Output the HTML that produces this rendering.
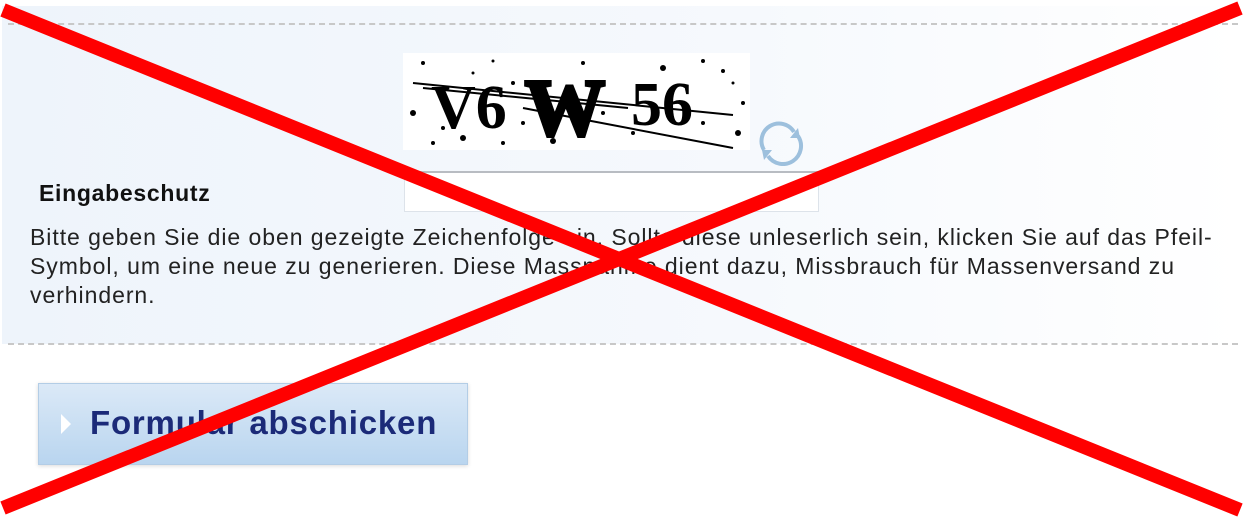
<!DOCTYPE html>
<html><head><meta charset="utf-8"><style>
body{margin:0;width:1244px;height:517px;background:#fff;position:relative;overflow:hidden;font-family:"Liberation Sans",Arial,sans-serif}
.panel{position:absolute;left:2px;top:6px;width:1240px;height:338px;background:linear-gradient(90deg,#eef4fb,#f6f9fd 60%,#fff)}
.dash{position:absolute;left:8px;width:1230px;border-top:2px dashed #c8c8c8}
.lbl{position:absolute;left:39px;top:180px;font-weight:bold;font-size:23px;letter-spacing:0.7px;color:#111}
.txt{position:absolute;left:30px;top:223px;white-space:nowrap;font-size:23px;letter-spacing:0.95px;line-height:29px;color:#222}
.cap{position:absolute;left:403px;top:53px;width:347px;height:97px;background:#fff}
.inp{position:absolute;left:404px;top:171px;width:413px;height:38px;background:#fff;border:1px solid #dde3ea;border-top:2px solid #b8bcc2}
.btn{position:absolute;left:38px;top:383px;width:428px;height:80px;background:linear-gradient(#dbe9f7,#b9d5ef);border:1px solid #b3cde6;box-shadow:0 1px 4px rgba(0,0,0,.15)}
.btn span{position:absolute;left:51px;top:20px;font-size:33px;letter-spacing:0.8px;font-weight:bold;color:#1b2a78}
.tri{position:absolute;left:22px;top:30px;width:0;height:0;border-left:10px solid #fff;border-top:10px solid transparent;border-bottom:10px solid transparent}
</style></head><body>
<div class="panel"></div>
<div class="dash" style="top:23px"></div>
<div class="dash" style="top:343px"></div>
<div class="cap"><svg width="347" height="97">
<g fill="#000">
<circle cx="20" cy="10" r="2"/><circle cx="90" cy="8" r="1.5"/><circle cx="260" cy="15" r="3"/><circle cx="300" cy="8" r="2"/><circle cx="320" cy="18" r="2"/><circle cx="10" cy="60" r="3"/><circle cx="40" cy="75" r="2"/><circle cx="60" cy="85" r="3"/><circle cx="120" cy="70" r="2"/><circle cx="150" cy="88" r="3"/><circle cx="230" cy="80" r="2"/><circle cx="300" cy="70" r="2"/><circle cx="335" cy="80" r="3"/><circle cx="340" cy="50" r="2"/><circle cx="180" cy="10" r="2"/><circle cx="240" cy="35" r="2"/><circle cx="30" cy="90" r="2"/><circle cx="100" cy="90" r="2"/><circle cx="200" cy="60" r="2"/><circle cx="330" cy="30" r="1.5"/><circle cx="110" cy="30" r="2"/><circle cx="70" cy="20" r="1.5"/>
</g>
<text x="28" y="75" font-family="Liberation Serif" font-size="62" font-weight="bold" fill="#000">V6</text>
<text x="122" y="82" font-family="Liberation Serif" font-size="80" font-weight="900" fill="#000" stroke="#000" stroke-width="4">W</text>
<text x="228" y="72" font-family="Liberation Serif" font-size="62" font-weight="bold" fill="#000">56</text>
<path d="M10 30 L330 62 M20 35 L225 55 M120 55 L330 95" stroke="#000" stroke-width="2" fill="none"/>
</svg></div>
<svg style="position:absolute;left:756px;top:120px" width="50" height="46"><path d="M8 30 A17 17 0 0 1 38 12 M42 16 A17 17 0 0 1 12 36" stroke="#9dc0dd" stroke-width="4" fill="none"/><path d="M34 18 L44 18 L42 8Z M16 30 L6 30 L8 40Z" fill="#9dc0dd"/></svg>
<div class="inp"></div>
<div class="lbl">Eingabeschutz</div>
<div class="txt">Bitte geben Sie die oben gezeigte Zeichenfolge ein. Sollte diese unleserlich sein, klicken Sie auf das Pfeil-<br>Symbol, um eine neue zu generieren. Diese Massnahme dient dazu, Missbrauch für Massenversand zu<br>verhindern.</div>
<div class="btn"><div class="tri"></div><span>Formular abschicken</span></div>
<svg style="position:absolute;left:0;top:0" width="1244" height="517"><path d="M3 10 L1240 510 M1240 8 L3 508" stroke="#ff0000" stroke-width="14"/></svg>
</body></html>
